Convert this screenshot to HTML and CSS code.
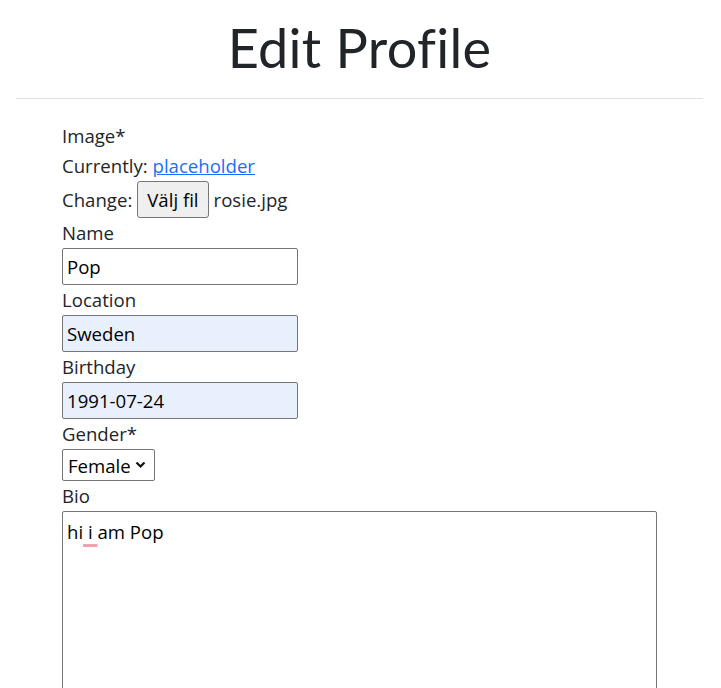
FILE: index.html
```html
<!DOCTYPE html>
<html lang="en">
<head>
<meta charset="utf-8">
<title>Edit Profile</title>
<link rel="stylesheet" href="styles.css">
</head>
<body>
<div class="page">
  <header class="header">
    <h1 class="title">Edit Profile</h1>
  </header>
  <hr class="divider">
  <form class="form">
    <div class="line">Image*</div>
    <div class="line">Currently: <a href="#" class="link">placeholder</a></div>
    <div class="file-row">Change: <span class="file-btn">Välj fil</span><span class="file-name">rosie.jpg</span></div>
    <label class="line">Name</label>
    <input class="text-input" type="text" value="Pop">
    <label class="line">Location</label>
    <input class="text-input filled" type="text" value="Sweden">
    <label class="line">Birthday</label>
    <input class="text-input filled" type="text" value="1991-07-24">
    <label class="line">Gender*</label>
    <div class="select">Female <svg class="chev" width="11" height="8" viewBox="0 0 11 8"><path d="M1.5 1.5 L5.5 5.5 L9.5 1.5" fill="none" stroke="#111" stroke-width="2.2"/></svg></div>
    <label class="line">Bio</label>
    <div class="textarea">hi<span class="spell"> i </span>am Pop</div>
  </form>
</div>
</body>
</html>
```

FILE: styles.css
```css
html, body {
  margin: 0;
  padding: 0;
  background: #fff;
  overflow: hidden;
}
body {
  font-family: "Open Sans", "Noto Sans", sans-serif;
  font-size: 18.6px;
  color: #212529;
}
.page {
  padding: 0 18px 0 16px;
}
.header {
  height: 98px;
  display: flex;
  justify-content: center;
  align-items: center;
}
.title {
  margin: 0;
  font-family: "Lato", sans-serif;
  font-weight: 400;
  font-size: 54px;
  letter-spacing: 0.3px;
  color: #212529;
  line-height: 1;
  padding-bottom: 2px;
}
.divider {
  margin: 0;
  border: 0;
  border-top: 1px solid #e2e2e6;
}
.form {
  display: flex;
  flex-direction: column;
  align-items: flex-start;
  padding: 22px 0 0 46px;
}
.line {
  display: block;
  height: 30px;
  line-height: 30px;
}
.link {
  color: #1a6dfd;
  text-decoration: underline;
}
.file-row {
  display: flex;
  align-items: center;
  height: 37px;
}
.file-btn {
  display: inline-flex;
  align-items: center;
  height: 37px;
  box-sizing: border-box;
  padding: 0 9px;
  margin-left: 5px;
  background: #efefef;
  border: 1px solid #767676;
  border-radius: 3px;
  color: #000;
}
.file-name {
  margin-left: 5px;
}
.text-input {
  box-sizing: border-box;
  width: 236px;
  height: 37px;
  margin: 0;
  padding: 0 4px;
  border: 1px solid #767676;
  border-radius: 2px;
  font: inherit;
  color: #000;
  background: #fff;
}
.text-input.filled {
  background: #e8f0fe;
}
.select {
  box-sizing: border-box;
  width: 93px;
  height: 32px;
  display: flex;
  align-items: center;
  padding: 0 0 0 5px;
  gap: 4px;
  border: 1px solid #767676;
  border-radius: 2px;
  color: #000;
}
.textarea {
  box-sizing: border-box;
  width: 595px;
  height: 200px;
  border: 1px solid #767676;
  border-radius: 2px;
  padding: 5px 4px;
  line-height: 30px;
  color: #000;
}
.spell {
  text-decoration: underline;
  text-decoration-color: #f4a0b0;
  text-decoration-thickness: 3px;
  text-underline-offset: 5px;
}
```
